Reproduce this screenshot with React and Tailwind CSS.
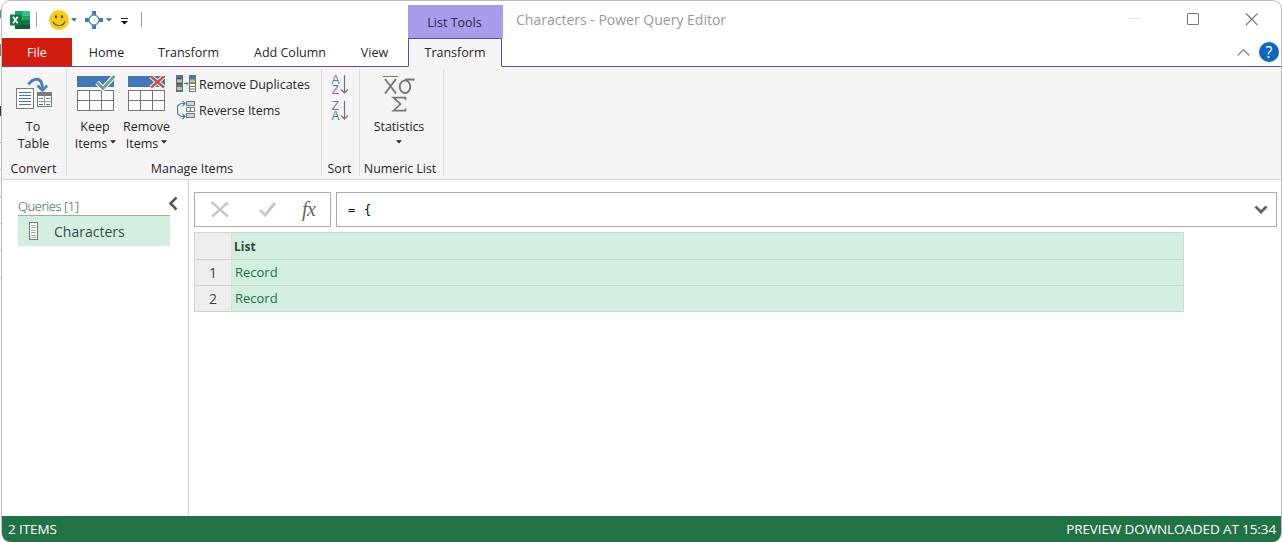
import React from "react";

const Caret = ({ className = "" }) => (
  <svg className={"block shrink-0 " + className} width="6" height="4" viewBox="0 0 6 4">
    <path d="M0 0.300H6L3 3.600Z" fill="currentColor" />
  </svg>
);

const ExcelLogo = () => (
  <svg className="block shrink-0" width="20" height="18" viewBox="0 0 20 18">
    <path d="M5 0h8v6H5z" fill="#21a366" />
    <path d="M12.500 0H20v5h-7.500z" fill="#33c481" />
    <path d="M5 5h7.500v5H5z" fill="#107c41" />
    <path d="M12.500 5H20v5h-7.500z" fill="#21a366" />
    <path d="M5 9.500h15V18H5z" fill="#185c37" />
    <path d="M12.500 9.500H20V13.500h-7.500z" fill="#107c41" />
    <rect x="0" y="3.500" width="11" height="11" rx="0.800" fill="#107c41" />
    <path d="M3 5.800L7.700 12.200M7.700 5.800L3 12.200" stroke="#fff" strokeWidth="1.700" />
  </svg>
);

const Smiley = () => (
  <svg className="block shrink-0" width="20" height="20" viewBox="0 0 20 20">
    <circle cx="10" cy="10" r="10" fill="#fbc91b" />
    <ellipse cx="7" cy="6.800" rx="1.200" ry="1.700" fill="#4f5a45" />
    <ellipse cx="13" cy="6.800" rx="1.200" ry="1.700" fill="#4f5a45" />
    <path d="M4 11.500Q5.500 15.500 10 15.500T16 11.500" fill="none" stroke="#4f5a45" strokeWidth="1.200" />
  </svg>
);

const Target = () => (
  <svg className="block shrink-0" width="18" height="18" viewBox="0 0 18 18">
    <path d="M7 0h4v4h-4zM7 14h4v4h-4zM0 7h4v4H0zM14 7h4v4h-4z" fill="#3f7ab5" />
    <circle cx="9" cy="9" r="5" fill="#fff" stroke="#5b8dc0" strokeWidth="1.300" />
  </svg>
);

const ToTable = () => (
  <svg className="block" width="38" height="34" viewBox="0 0 38 34">
    <rect x="1.500" y="12.500" width="17" height="20" fill="#fff" stroke="#7b7b7b" />
    <path d="M4 16.500h12M4 19.500h12M4 22.500h12M4 25.500h12M4 28.500h12" stroke="#4279b0" />
    <rect x="22.500" y="17.500" width="14" height="13" fill="#fff" stroke="#7b7b7b" />
    <path d="M22 16h15v4H22z" fill="#7b7b7b" />
    <path d="M29.500 20v11M22 25.500h15" stroke="#9a9a9a" />
    <path d="M24 22.500h4M31 22.500h4M24 28.500h4M31 28.500h4" stroke="#4279b0" />
    <path d="M13.500 8.500Q17 2.800 22.500 3.200Q27.500 4 27.500 13" fill="none" stroke="#4b80b8" strokeWidth="3" />
    <path d="M22.500 9.500L27.500 14.300L32.200 9.500" fill="none" stroke="#4b80b8" strokeWidth="2.600" />
  </svg>
);

const Grid = ({ children }) => (
  <svg className="block" width="40" height="39" viewBox="0 0 40 39">
    <path d="M1 4h37v11H1z" fill="#4279b5" />
    <rect x="1.500" y="18.500" width="36" height="20" fill="#fff" stroke="#777" />
    <path d="M13.500 18v20M25.500 18v20M1 28.500h37" stroke="#777" />
    {children}
  </svg>
);

const RemoveDuplicates = () => (
  <svg className="block shrink-0" width="20" height="18" viewBox="0 0 20 18">
    <path d="M0 0h7v17H0zM13 0h7v9h-7z" fill="#55748f" />
    <path d="M1 4.500h5v3H1zM1 12h5v3H1zM14 4.500h5v3h-5z" fill="#dfb978" />
    <path d="M1 8.500h5M1 3.500h5" stroke="#3d4f60" />
    <rect x="13.500" y="8.500" width="6" height="8" fill="#fff" stroke="#777" />
    <path d="M13 11.500h7M13 14h7" stroke="#777" />
    <path d="M8 8.500h4M10.500 7l1.500 1.500L10.500 10" fill="none" stroke="#3f78b8" />
  </svg>
);

const Reverse = () => (
  <svg className="block shrink-0" width="19" height="18" viewBox="0 0 19 18">
    <path d="M8 2.500H4L0.600 5V13L4 15.500H8" fill="none" stroke="#4b80b8" strokeWidth="1.200" />
    <path d="M5.500 0L8 2.500L5.500 5M5.500 13L8 15.500L5.500 18" fill="none" stroke="#4b80b8" strokeWidth="1.300" />
    <rect x="9.500" y="0.500" width="8" height="4" fill="#c5d6e5" stroke="#777" />
    <path d="M9.500 6.500h8v4h-8zM13.500 6.500v4" fill="#fff" stroke="#777" />
    <rect x="9.500" y="12.500" width="8" height="4" fill="#c5d6e5" stroke="#777" />
  </svg>
);

const SortIcon = ({ top, bottom, topClass, bottomClass }) => (
  <div className="flex h-[20px] w-[18px] justify-between">
    <div className="flex w-[9px] flex-col items-center font-['Liberation_Sans',sans-serif] text-[12px] leading-[10px]">
      <span className={topClass}>{top}</span>
      <span className={bottomClass}>{bottom}</span>
    </div>
    <svg className="block" width="9" height="20" viewBox="0 0 9 20">
      <path d="M4.500 0v18M1 14.500l3.500 3.500L8 14.500" fill="none" stroke="#6f6f6f" strokeWidth="1.200" />
    </svg>
  </div>
);

const Group = ({ className, label, labelClass = "", children }) => (
  <div className={"flex shrink-0 flex-col border-r border-[#dedddf] " + className}>
    <div className="h-[92px] shrink-0">{children}</div>
    <div className={"text-center leading-[16px] whitespace-nowrap " + labelClass}>{label}</div>
  </div>
);

const Tab = ({ className, children }) => (
  <div className={"flex h-[29px] shrink-0 items-center justify-center border-b border-[#6549b5] pt-[2px] whitespace-nowrap " + className}>
    {children}
  </div>
);

const Row = ({ n }) => (
  <div className="flex h-[26px] border-b border-[#cbd5cf]">
    <div className="flex w-[37px] items-center justify-center border-r border-[#dcdcdc] bg-[#eeeeee] text-[14px] text-[#444]">{n}</div>
    <div className="flex flex-1 items-center bg-[#d3efe0] pt-px pl-[3px] text-[13px] text-[#217346]">Record</div>
  </div>
);

export default function App() {
  return (
    <div className="flex h-[542px] w-[1282px] overflow-hidden bg-white font-['Open_Sans','Noto_Sans',sans-serif] text-[12.500px] text-[#262626]">
      <div className="flex w-px shrink-0 flex-col gap-[26px] pt-[10px]">
        <i className="h-[8px] bg-[#5d8c96]" />
        <i className="h-[12px] bg-[#a86e53]" />
        <i className="mt-[24px] h-[10px] bg-[#333]" />
        <i className="h-px bg-[#aaa]" />
        <i className="h-px bg-[#ccc]" />
        <i className="h-px bg-[#aaa]" />
        <i className="h-px bg-[#ccc]" />
        <i className="h-px bg-[#ccc]" />
        <i className="h-px bg-[#ccc]" />
      </div>
      <div className="flex flex-1 flex-col overflow-hidden rounded-[9px] border border-b-0 border-[#bdbdbd] bg-white">
        <header className="flex h-[37px] shrink-0">
          <div className="flex w-[406px] items-center pl-[8px]">
            <ExcelLogo />
            <i className="mr-[12px] ml-[6px] h-[15px] w-px bg-[#9aa39f]" />
            <Smiley />
            <Caret className="ml-[2px] text-[#53685f]" />
            <span className="w-[8px]" />
            <Target />
            <Caret className="ml-[3px] text-[#53685f]" />
            <svg className="mt-[3px] ml-[9px] block" width="7" height="7" viewBox="0 0 7 7">
              <path d="M0 0.500h7" stroke="#222" />
              <path d="M0 3h7L3.500 6.500z" fill="#111" />
            </svg>
            <i className="ml-[13px] h-[15px] w-px bg-[#9aa39f]" />
          </div>
          <div className="mt-[4px] flex h-[33px] w-[95px] items-center justify-center bg-[#a99cec] pt-[3px] pr-[2px] text-[#2b2547]">List Tools</div>
          <h1 className="ml-[13px] flex items-center text-[14px] text-[#9a9a9a]">Characters - Power Query Editor</h1>
          <svg className="mt-[11px] mr-px ml-auto block" width="152" height="14" viewBox="0 0 152 14">
            <path d="M0 6.500h13" stroke="#e5e5e5" />
            <rect x="59.500" y="1.500" width="11" height="11" rx="0.500" fill="none" stroke="#777" />
            <path d="M118 1.500l11.500 11.500M129.500 1.500L118 13" stroke="#777" strokeWidth="1.100" />
          </svg>
        </header>

        <nav className="flex shrink-0">
          <Tab className="w-[70px] border-[#8c3a95]! bg-[#d11c10] text-white">File</Tab>
          <Tab className="w-[69px]">Home</Tab>
          <Tab className="w-[95px]">Transform</Tab>
          <Tab className="w-[108px]">Add Column</Tab>
          <Tab className="w-[64px] pr-[3px]">View</Tab>
          <Tab className="w-[94px] border border-b-[#f6f5f6]! bg-[#f6f5f6] pt-px!">Transform</Tab>
          <Tab className="flex-1 justify-end! pt-0!">
            <svg className="mr-[9px] block" width="13" height="7" viewBox="0 0 13 7">
              <path d="M0.700 6.500L6.500 0.700L12.300 6.500" fill="none" stroke="#888" strokeWidth="1.300" />
            </svg>
            <span className="mr-[2px] flex size-[20px] items-center justify-center rounded-full bg-[#0f66bd] text-[16px] leading-none font-medium text-white">?</span>
          </Tab>
        </nav>

        <section className="flex h-[113px] shrink-0 border-b border-[#d6d6d6] bg-[#f6f5f6] pt-[2px] pb-[3px]">
          <Group className="w-[65px]" label="Convert" labelClass="pr-px">
            <div className="flex flex-col items-center pt-[7px] leading-[17px]">
              <ToTable />
              <span className="mt-[8px] pr-[2px]">To</span>
              <span className="pr-px">Table</span>
            </div>
          </Group>
          <Group className="w-[255px]" label="Manage Items" labelClass="pr-[4px]">
            <div className="flex">
              <div className="flex w-[51px] flex-col items-center pt-[3px] pl-[6px] leading-[17px]">
                <Grid><path d="M21 10.500l6 6L38.500 4" fill="none" stroke="#f6f5f6" strokeWidth="5" /><path d="M21 10.500l6 6L38.500 4" fill="none" stroke="#6fa28c" strokeWidth="2.800" /></Grid>
                <span className="mt-[7px] pr-px">Keep</span>
                <span className="flex items-center gap-[3px]">Items<Caret className="mb-[3px]" /></span>
              </div>
              <div className="flex w-[51px] flex-col items-center pt-[3px] pl-[6px] leading-[17px]">
                <Grid><path d="M24 4.500l13 11M37 4.500l-13 11" stroke="#f6f5f6" strokeWidth="4.500" /><path d="M24 4.500l13 11M37 4.500l-13 11" stroke="#cc5240" strokeWidth="2.500" /></Grid>
                <span className="mt-[7px]">Remove</span>
                <span className="flex items-center gap-[3px]">Items<Caret className="mb-[3px]" /></span>
              </div>
              <div className="flex flex-col gap-[8px] pt-[6px] pl-[7px] whitespace-nowrap">
                <div className="flex h-[18px] items-center gap-[3px]"><RemoveDuplicates /><span className="pt-[2px] tracking-[-0.030px]">Remove Duplicates</span></div>
                <div className="flex h-[18px] items-center gap-[3px] pl-px"><Reverse /><span className="pt-[2px] tracking-[-0.050px]">Reverse Items</span></div>
              </div>
            </div>
          </Group>
          <Group className="w-[38px]" label="Sort" labelClass="pr-[2px]">
            <div className="flex flex-col items-center gap-[6px] pt-[6px] pr-px">
              <SortIcon top="A" bottom="Z" topClass="text-[#4b80b8]" bottomClass="text-[#9460a8]" />
              <SortIcon top="Z" bottom="A" topClass="text-[#9460a8]" bottomClass="text-[#4b80b8]" />
            </div>
          </Group>
          <Group className="w-[84px]" label="Numeric List" labelClass="pr-[3px] tracking-[-0.080px]">
            <div className="flex flex-col items-center pt-[6px] pr-[5px]">
              <svg className="block" width="32" height="38" viewBox="0 0 32 38">
                <path d="M0 1.500h15" stroke="#777" />
                <path d="M2 4L13 18.500M13 4L2 18.500" fill="none" stroke="#777" strokeWidth="1.900" />
                <ellipse cx="22" cy="11.700" rx="5.300" ry="6.300" fill="none" stroke="#777" strokeWidth="1.900" />
                <path d="M22 4.500h9.500" stroke="#777" strokeWidth="2" />
                <path d="M22.500 25v-2.300H10.500l7 6.300-7 6.700H22.500V33.500" fill="none" stroke="#777" strokeWidth="1.700" />
              </svg>
              <span className="mt-[5px] leading-[17px] tracking-[-0.100px]">Statistics</span>
              <Caret className="mt-[5px]" />
            </div>
          </Group>
        </section>

        <main className="flex h-[336px] shrink-0">
          <aside className="w-[187px] shrink-0 border-r border-[#d4d4d4] pt-[15px] pl-[16px]">
            <div className="flex h-[21px] w-[160px] items-start justify-between">
              <div className="flex h-[21px] w-[152px] items-end border-b border-[#a5aca8] text-[13px] leading-[18px] font-light tracking-[-0.400px] text-[#0f5c33]">Queries [1]</div>
              <svg className="-ml-[4px] block shrink-0" width="10" height="16" viewBox="0 0 10 16">
                <path d="M8.500 2.500L2.500 8.500L8.500 14.500" fill="none" stroke="#555" strokeWidth="2.500" />
              </svg>
            </div>
            <div className="flex h-[30px] w-[152px] items-center bg-[#d3efe0] pl-[11px] text-[14px] text-[#35504a]">
              <svg className="mr-[16px] block" width="9" height="18" viewBox="0 0 9 18">
                <rect x="0.500" y="0.500" width="8" height="17" fill="#fff" stroke="#777" />
                <path d="M2 3.500h5M2 5.500h5M2 8.500h5M2 10.500h5M2 13.500h5M2 15.500h5" stroke="#aaa" />
              </svg>
              Characters
            </div>
          </aside>
          <div className="flex-1 pt-[12px] pr-[4px] pl-[5px]">
            <div className="flex h-[35px] gap-[5px]">
              <div className="flex w-[137px] shrink-0 items-center border border-[#ababab]">
                <svg className="ml-[15px] block" width="20" height="17" viewBox="0 0 20 17">
                  <path d="M1.500 1L18 15.500M18 1.500L2 15.500" stroke="#c9c9c9" strokeWidth="2.600" />
                </svg>
                <svg className="ml-[29px] block" width="17" height="15" viewBox="0 0 17 15">
                  <path d="M1 8l5 5L16 1" fill="none" stroke="#c9c9c9" strokeWidth="3" />
                </svg>
                <span className="mb-[2px] ml-[26px] font-['Liberation_Serif',serif] text-[20px] leading-[20px] tracking-[-0.600px] text-[#666] italic">fx</span>
              </div>
              <div className="flex flex-1 items-center justify-between border border-[#ababab] pr-[8px] pl-[11px]">
                <span className="font-['DejaVu_Sans_Mono',monospace] text-[12px] tracking-[0.800px] whitespace-pre text-black">= {"{"}</span>
                <svg className="block" width="14" height="9" viewBox="0 0 14 9">
                  <path d="M1.500 1.500L7 7L12.500 1.500" fill="none" stroke="#606060" strokeWidth="2.800" />
                </svg>
              </div>
            </div>
            <div className="mt-[5px] w-[990px] border border-b-0 border-[#cfd8d3]">
              <div className="flex h-[27px] border-b border-[#cbd5cf]">
                <div className="w-[37px] border-r border-[#dcdcdc] bg-[#eeeeee]" />
                <div className="flex flex-1 items-center bg-[#d3efe0] pt-[2px] pl-[2px] text-[12px] font-bold text-[#30443c]">List</div>
              </div>
              <Row n={1} />
              <Row n={2} />
            </div>
          </div>
        </main>

        <footer className="flex flex-1 items-center justify-between bg-[#217346] pt-px pr-[5px] pl-[6px] text-[13.500px] text-white">
          <span className="tracking-[-0.100px]">2 ITEMS</span>
          <span className="tracking-[-0.110px]">PREVIEW DOWNLOADED AT 15:34</span>
        </footer>
      </div>
    </div>
  );
}
